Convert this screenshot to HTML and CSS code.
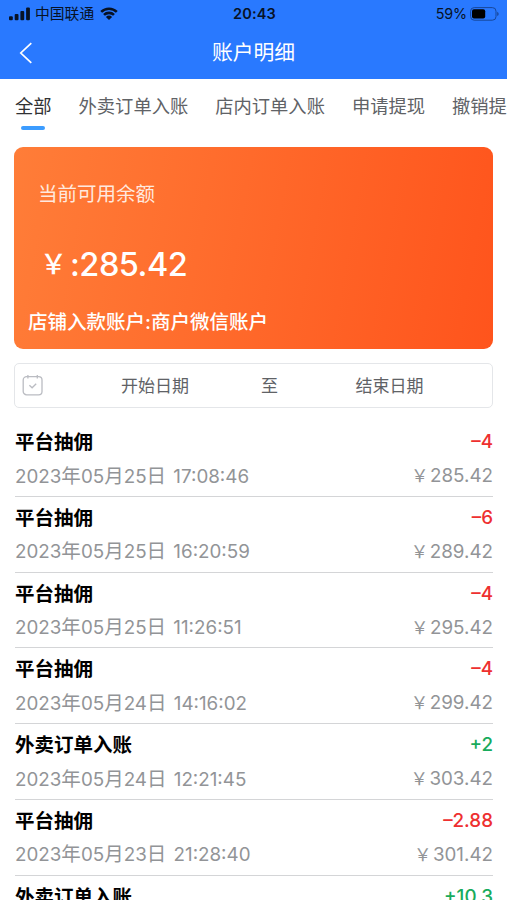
FILE: index.html
```html
<!DOCTYPE html>
<html lang="zh-CN">
<head>
<meta charset="utf-8">
<title>账户明细</title>
<link rel="stylesheet" href="styles.css">
</head>
<body>
<header class="header">
  <div class="status">
    <div class="status-left">
      <svg class="signal" width="22" height="14" viewBox="0 0 22 14"><rect x="0" y="9.2" width="3.8" height="4.1" rx="1"/><rect x="5.7" y="7" width="3.8" height="6.3" rx="1"/><rect x="11.4" y="4" width="3.8" height="9.3" rx="1"/><rect x="17.1" y="0.6" width="3.8" height="12.7" rx="1"/></svg>
      <span class="carrier">中国联通</span>
      <svg class="wifi" width="18" height="14" viewBox="0 0 18 14"><path d="M1.2 4.9a11.2 11.2 0 0 1 15.6 0M4 7.9a7.2 7.2 0 0 1 10 0" fill="none" stroke="#071226" stroke-width="2.6"/><path d="M5.9 10a4.5 4.5 0 0 1 6.2 0L9 13.1z"/></svg>
    </div>
    <div class="clock">20:43</div>
    <div class="status-right">
      <span class="percent">59%</span>
      <svg class="battery" width="30" height="14" viewBox="0 0 30 14"><rect x="0.6" y="0.6" width="25.4" height="12.6" rx="3.6" fill="none" stroke="#17479a" stroke-width="1"/><rect x="2" y="2.2" width="13.2" height="9.4" rx="2" fill="#000"/><path d="M27.2 4.7c2 .8 2 3.6 0 4.4z" fill="#17479a"/></svg>
    </div>
  </div>
  <div class="navbar">
    <svg class="back" width="14" height="22" viewBox="0 0 14 22"><path d="M12.3 1.2 1.8 11l10.5 9.8" fill="none" stroke="#fff" stroke-width="1.7"/></svg>
    <h1 class="title">账户明细</h1>
  </div>
</header>
<nav class="tabs">
  <span class="tab active">全部</span>
  <span class="tab">外卖订单入账</span>
  <span class="tab">店内订单入账</span>
  <span class="tab">申请提现</span>
  <span class="tab">撤销提现</span>
</nav>
<main class="content">
  <section class="card">
    <div class="card-label">当前可用余额</div>
    <div class="card-amount"><span class="yen">￥</span>:285.42</div>
    <div class="card-account">店铺入款账户:商户微信账户</div>
  </section>
  <section class="range">
    <svg class="calendar" width="22" height="22" viewBox="0 0 22 22" fill="none" stroke="#babcc2" stroke-width="1.3"><rect x="1.2" y="2.6" width="18.8" height="18.2" rx="3.4"/><path d="M5.9 1v3.4M15.3 1v3.4M7.4 11.3l2.7 2.5 4.1-4"/></svg>
    <span class="date">开始日期</span>
    <span class="to">至</span>
    <span class="date end">结束日期</span>
  </section>
  <ul class="list">
    <li class="row"><div class="line"><b class="name">平台抽佣</b><span class="change minus">–4</span></div><div class="line sub"><span class="time">2023<i>年</i>05<i>月</i>25<i>日</i> 17:08:46</span><span class="balance"><i class="cny">￥</i>285.42</span></div></li>
    <li class="row"><div class="line"><b class="name">平台抽佣</b><span class="change minus">–6</span></div><div class="line sub"><span class="time">2023<i>年</i>05<i>月</i>25<i>日</i> 16:20:59</span><span class="balance"><i class="cny">￥</i>289.42</span></div></li>
    <li class="row"><div class="line"><b class="name">平台抽佣</b><span class="change minus">–4</span></div><div class="line sub"><span class="time">2023<i>年</i>05<i>月</i>25<i>日</i> 11:26:51</span><span class="balance"><i class="cny">￥</i>295.42</span></div></li>
    <li class="row"><div class="line"><b class="name">平台抽佣</b><span class="change minus">–4</span></div><div class="line sub"><span class="time">2023<i>年</i>05<i>月</i>24<i>日</i> 14:16:02</span><span class="balance"><i class="cny">￥</i>299.42</span></div></li>
    <li class="row"><div class="line"><b class="name">外卖订单入账</b><span class="change plus">+2</span></div><div class="line sub"><span class="time">2023<i>年</i>05<i>月</i>24<i>日</i> 12:21:45</span><span class="balance"><i class="cny">￥</i>303.42</span></div></li>
    <li class="row"><div class="line"><b class="name">平台抽佣</b><span class="change minus">–2.88</span></div><div class="line sub"><span class="time">2023<i>年</i>05<i>月</i>23<i>日</i> 21:28:40</span><span class="balance"><i class="cny">￥</i>301.42</span></div></li>
    <li class="row"><div class="line"><b class="name">外卖订单入账</b><span class="change plus">+10.3</span></div></li>
  </ul>
</main>
</body>
</html>
```

FILE: styles.css
```css
* { box-sizing: border-box; }
body {
  margin: 0;
  height: 900px;
  overflow: hidden;
  background: #fff;
  font-family: Inter, "Noto Sans CJK SC", sans-serif;
  color: #000;
}
i { font-style: normal; }
.header { height: 79px; background: #2979ff; }
.status {
  display: grid;
  grid-template-columns: 1fr auto 1fr;
  align-items: center;
  height: 27px;
  padding: 0 7px 0 9px;
  color: #071226;
  fill: #071226;
}
.status-left, .status-right { display: flex; align-items: center; }
.status-right { justify-content: flex-end; }
.carrier { margin: 0 6px 0 4px; font-size: 14.8px; line-height: 20px; }
.clock { font-size: 14.5px; font-weight: 600; letter-spacing: .2px; }
.percent { margin-right: 3px; font-size: 14.3px; letter-spacing: -.1px; }
.navbar {
  display: grid;
  grid-template-columns: 40px 1fr 40px;
  align-items: center;
  height: 51px;
}
.back { margin-left: 19px; }
.title {
  margin: 0;
  text-align: center;
  font-size: 20.8px;
  line-height: 30px;
  font-weight: 400;
  color: #fff;
}
.tabs {
  display: flex;
  gap: 27px;
  height: 68px;
  padding: 12px 0 0 15px;
  overflow: hidden;
  white-space: nowrap;
}
.tab { flex: none; font-size: 18.3px; line-height: 30px; color: #606266; }
.tab.active { color: #303133; }
.tab.active::after {
  content: "";
  display: block;
  width: 24px;
  height: 4px;
  margin: 5px auto 0;
  border-radius: 2px;
  background: #3c9cff;
}
.content { padding: 0 14px 0 15px; }
.card {
  height: 202px;
  margin-left: -1px;
  padding: 32px 14px 0;
  border-radius: 9px;
  background: linear-gradient(100deg, #ff7d38, #ff541c);
  color: #fff;
}
.card-label { padding-left: 10px; font-size: 19.5px; line-height: 30px; color: #ffe9df; }
.card-amount { display: flex; padding-left: 9px; margin-top: 34px; font-size: 32.5px; line-height: 44px; font-weight: 500; letter-spacing: -.5px; }
.yen { width: 33px; padding-left: 3px; font-size: 27px; }
.card-account { margin-top: 20px; font-size: 19.5px; line-height: 30px; font-weight: 500; }
.range {
  display: grid;
  grid-template-columns: 27px 212px 16px 1fr;
  align-items: center;
  height: 45px;
  margin: 14px 0 12px -1px;
  padding: 0 0 2px 7px;
  border: 1px solid #e4e6e9;
  border-radius: 5px;
  font-size: 17px;
  color: #606266;
}
.date { text-align: center; }
.date.end { padding-left: 10px; }
.list { margin: 0; padding: 0; list-style: none; }
.row { height: 75.75px; padding-top: 4px; border-bottom: 1.5px solid #d4d5d7; }
.row:first-child { height: 76.75px; padding-top: 5px; }
.line { display: flex; justify-content: space-between; align-items: center; height: 34px; line-height: 34px; }
.name { font-size: 19.5px; font-weight: 700; }
.change { font-size: 18.8px; font-weight: 500; }
.minus { color: #ee3030; }
.plus { color: #18ab5c; }
.sub { font-size: 18.8px; color: #929497; }
.sub i { font-size: 19.5px; }
.sub .cny { display: inline-block; width: 18px; font-size: 17.5px; text-indent: -1px; }
.time { word-spacing: 2px; }
```
